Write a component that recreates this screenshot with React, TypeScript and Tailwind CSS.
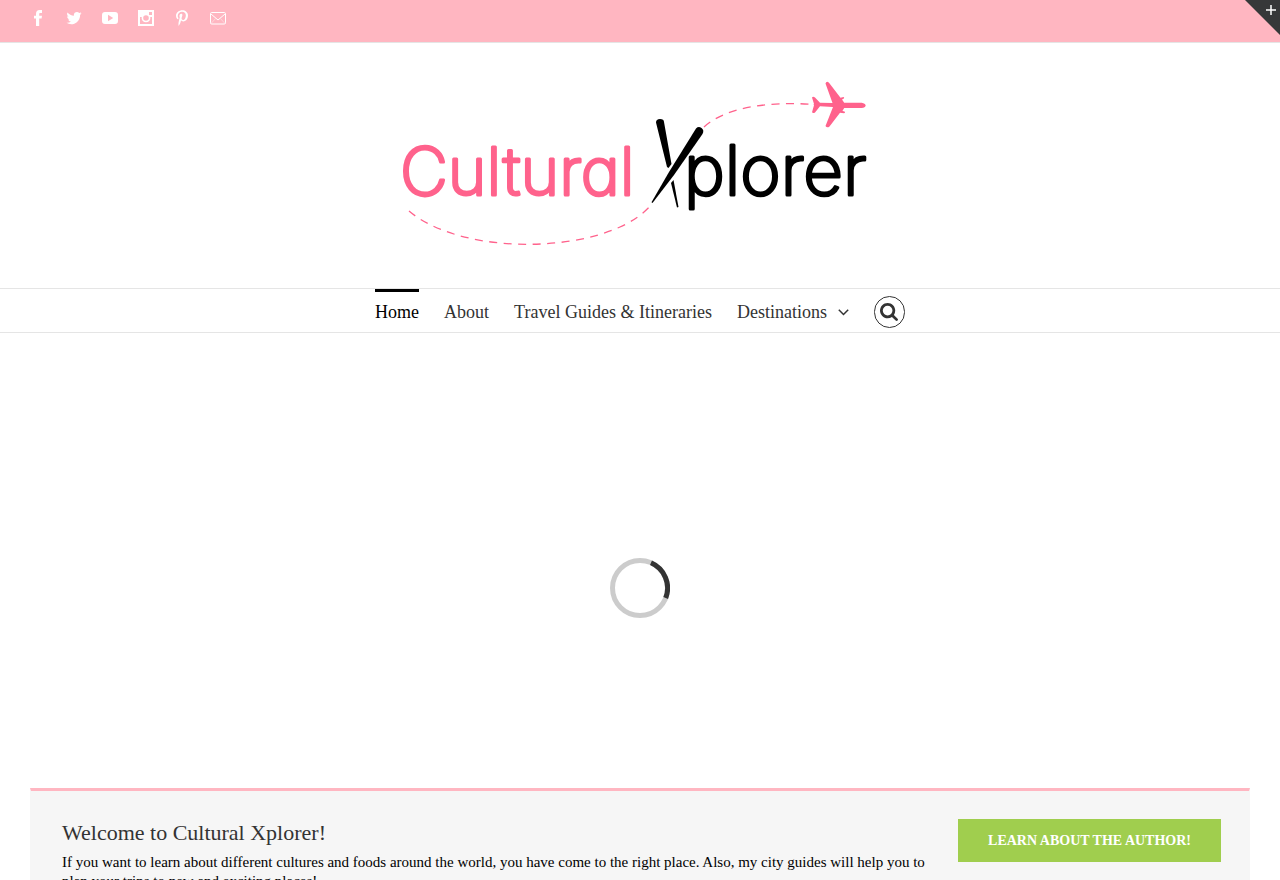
import React from "react";
import { FaPinterestP } from "react-icons/fa";

function FacebookIcon() {
  return (
    <svg viewBox="0 0 16 16" className="size-4 fill-current" aria-hidden="true">
      <path d="M6 16V8.600H4V5.700h2V3.900C6 1.500 7.300 0 9.600 0H12v2.900h-1.600c-.9 0-1.200.4-1.200 1.200v1.600H12l-.4 2.900H9.200V16z" />
    </svg>
  );
}

function TwitterIcon() {
  return (
    <svg viewBox="60 90 1664 1600" className="size-4 fill-current" aria-hidden="true">
      <path d="M1684 408q-67 98-162 167 1 14 1 42 0 130-38 259.500t-115.500 248.500-184.500 210.500-258 146-323 54.500q-271 0-496-145 35 4 78 4 225 0 401-138-105-2-188-64.500t-114-159.500q33 5 61 5 43 0 85-11-112-23-185.500-111.500t-73.500-205.500v-4q68 38 146 41-66-44-105-115t-39-154q0-88 44-163 121 149 294.500 238.500t371.500 99.500q-8-38-8-74 0-134 94.500-228.500t228.500-94.500q140 0 236 102 109-21 205-78-37 115-142 178 93-10 186-50z" />
    </svg>
  );
}

function YoutubeIcon() {
  return (
    <svg viewBox="0 0 16 16" className="size-4 fill-current" aria-hidden="true">
      <path
        fillRule="evenodd"
        d="M3 2h10q3 0 3 3v6q0 3-3 3H3q-3 0-3-3V5q0-3 3-3zm3 2.800v6.400L11.200 8z"
      />
    </svg>
  );
}

function InstagramIcon() {
  return (
    <svg viewBox="0 0 16 16" className="size-4 fill-current" aria-hidden="true">
      <path
        fillRule="evenodd"
        d="M0 0h16v16H0zM2 7v7h12V7h-1.700a4.400 4.400 0 1 1-8.600 0zM11 2v3h3V2zM8 5.200a2.800 2.800 0 1 0 0 5.600 2.800 2.800 0 0 0 0-5.600z"
      />
    </svg>
  );
}

function MailIcon() {
  return (
    <svg viewBox="0 0 16 16" className="size-4 fill-none stroke-current" aria-hidden="true">
      <rect x=".5" y="2.500" width="15" height="11.500" rx="1.200" />
      <path d="M1 4l7 6 7-6" />
      <path d="M1 13.500l4.600-5M15 13.500l-4.600-5" strokeWidth=".4" />
    </svg>
  );
}

function SearchIcon() {
  return (
    <svg viewBox="0 128 1664 1664" className="size-[18px] fill-current" aria-hidden="true">
      <path d="M1152 832q0-185-131.500-316.500T704 384 387.500 515.500 256 832t131.500 316.500T704 1280t316.500-131.500T1152 832zm512 832q0 52-38 90t-90 38q-54 0-90-38l-343-342q-179 124-399 124-143 0-273.500-55.500t-225-150-150-225T0 832t55.500-273.500 150-225 225-150T704 128t273.500 55.500 225 150 150 225T1408 832q0 220-124 399l343 343q37 37 37 90z" />
    </svg>
  );
}

const socials = [
  { label: "Facebook", icon: <FacebookIcon /> },
  { label: "Twitter", icon: <TwitterIcon /> },
  { label: "YouTube", icon: <YoutubeIcon /> },
  { label: "Instagram", icon: <InstagramIcon /> },
  { label: "Pinterest", icon: <FaPinterestP className="size-4" /> },
  { label: "Email", icon: <MailIcon /> },
];

function Logo() {
  return (
    <svg
      viewBox="400 78 480 172"
      className="h-[172px] w-[480px] max-w-full"
      role="img"
      aria-label="Cultural Xplorer"
    >
      <g fill="none" stroke="#ff628c" strokeWidth="1.300">
        <path d="M409 211C455 250 560 254 620 227Q640 218 652 204" strokeDasharray="8 6.500" />
        <path d="M704 127C725 108 765 101 815 104.500" strokeDasharray="8 6.500" />
      </g>
      <path
        fill="#ff628c"
        d="M812 97.500q1-1.500 3 0l5 5.300 12.500.2-7-19.500q1-3 3.500-.8l11.500 15 3-.8q1.500.8-.5 2.200l-1 .4 2.200 3.300h17.500q3.500.6 4 2.700-.5 2.200-4 2.500l-17.500-.1-1.800 3.200 2.200.5q1.200 1.600-.6 1.700l-4-.5-10.500 13.600q-2.500 2-4-.5l7.500-19-13-.7-5 6.300q-2 1.200-3-.3l2-7-.5-.7.500-.6z"
      />
      <g
        fontFamily="Inter, sans-serif"
        fontWeight="200"
        strokeWidth="3"
        strokeLinejoin="round"
        className="[font-feature-settings:'cv11']"
      >
        <text x="400" y="195" fontSize="66" fill="#ff628c" stroke="#ff628c">
          Cultural
        </text>
        <text x="684" y="195" fontSize="69" fill="#000" stroke="#000">
          plorer
        </text>
      </g>
      <path d="M656 122.500q0-3.500 4-3.500t4 3l7.500 42-3 4-1.500-1z" />
      <path d="M696 128.500q2.500-2.500 5.500-.5t1 6L674 175l-21.500 28-1-.8L669 172z" />
      <path d="M671 183l2.500-3 5 27-1.500.5z" />
    </svg>
  );
}

function Spinner() {
  return (
    <svg viewBox="0 0 60 60" className="size-[60px]" role="img" aria-label="Loading">
      <g fill="none" strokeWidth="5">
        <circle cx="30" cy="30" r="27.500" stroke="#ccc" />
        <path d="M41 4.800A27.500 27.500 0 0 1 55.700 40" stroke="#333" />
      </g>
    </svg>
  );
}

export default function App() {
  return (
    <div className="min-h-screen bg-white font-['Liberation_Serif',serif] text-black">
      <div className="relative border-b border-[#e5e5e5] bg-[#ffb6c1]">
        <ul className="flex h-[42px] items-start gap-5 px-[30px] pt-[10px] text-white">
          {socials.map((s) => (
            <li key={s.label}>
              <a href="#" aria-label={s.label} className="block">
                {s.icon}
              </a>
            </li>
          ))}
        </ul>
        <button
          type="button"
          aria-label="Toggle sliding bar"
          className="absolute top-0 right-0 size-[35px] bg-[#363839] text-white [clip-path:polygon(0_0,100%_0,100%_100%)]"
        >
          <svg viewBox="0 0 35 35" className="size-full stroke-current" aria-hidden="true">
            <path d="M21 10h10M26 5v10" strokeWidth="1.500" />
          </svg>
        </button>
      </div>

      <header>
        <div className="flex justify-center pt-[35px] pb-[38px]">
          <a href="#">
            <Logo />
          </a>
        </div>
        <nav className="border-y border-[#e5e5e5]">
          <ul className="flex h-[43px] justify-center gap-[25px] text-lg text-[#333]">
            <li className="flex">
              <a href="#" className="flex items-center border-t-3 border-black pb-[1px] text-black">
                Home
              </a>
            </li>
            <li className="flex">
              <a href="#" className="flex items-center pt-[2px]">
                About
              </a>
            </li>
            <li className="flex">
              <a href="#" className="flex items-center pt-[2px]">
                Travel Guides &amp; Itineraries
              </a>
            </li>
            <li className="flex">
              <a href="#" className="flex items-center gap-[11px] pt-[2px]">
                Destinations
                <svg
                  viewBox="0 0 11 9"
                  className="h-[9px] w-[11px] fill-none stroke-current"
                  aria-hidden="true"
                >
                  <path d="M.8 2.800l4.700 4.700 4.700-4.700" strokeWidth="1.500" />
                </svg>
              </a>
            </li>
            <li className="flex items-center pt-[2px]">
              <button
                type="button"
                aria-label="Search"
                className="flex h-8 w-[31px] items-center justify-center rounded-full border border-[#333]"
              >
                <SearchIcon />
              </button>
            </li>
          </ul>
        </nav>
      </header>

      <main>
        <section className="flex h-[455px] items-center justify-center pt-[55px]">
          <Spinner />
        </section>
        <section className="mx-[30px] flex items-start gap-7 border-x border-t-3 border-x-[#f6f6f6] border-t-[#ffb6c1] bg-[#f6f6f6] px-7 pt-7 pb-8">
          <div className="flex-1 pl-[3px]">
            <h2 className="text-[22px] leading-7 text-[#333]">Welcome to Cultural Xplorer!</h2>
            <p className="pt-[6px] text-[15px] leading-[19px]">
              If you want to learn about different cultures and foods around the world, you have
              come to the right place. Also, my city guides will help you to plan your trips to new
              and exciting places!
            </p>
          </div>
          <a
            href="#"
            className="flex h-[43px] items-center bg-[#a0ce4e] px-[30px] text-sm font-bold text-white"
          >
            LEARN ABOUT THE AUTHOR!
          </a>
        </section>
      </main>
    </div>
  );
}
